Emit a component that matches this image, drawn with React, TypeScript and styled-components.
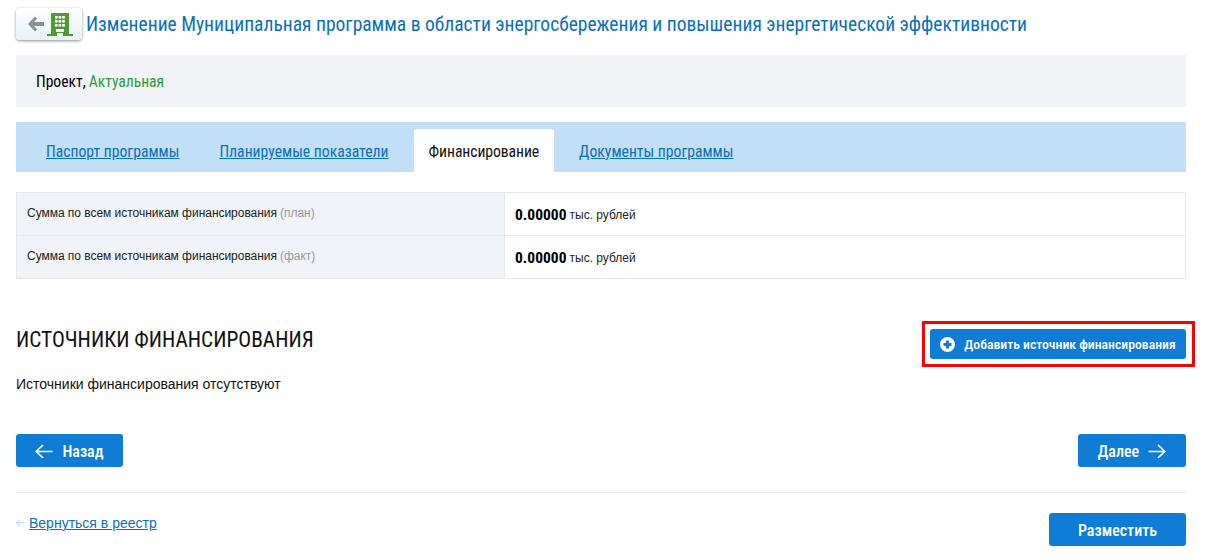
import styled, { createGlobalStyle } from "styled-components"

const GlobalStyle = createGlobalStyle`
	html, body {
		margin: 0;
		padding: 0;
		background: #fff;
		font-family: Roboto, "Liberation Sans", sans-serif;
	}
`

const Page = styled.div`
	width: 1170px;
	height: 559px;
	margin-left: 16px;
	display: flex;
	flex-direction: column;
`

const Header = styled.div`
	display: flex;
	align-items: center;
	gap: 5px;
	height: 32px;
	margin-top: 8px;
`

const BackTile = styled.a`
	width: 66px;
	height: 32px;
	box-sizing: border-box;
	padding-left: 12px;
	display: flex;
	align-items: center;
	gap: 3px;
	border-radius: 4px;
	background: linear-gradient(#ffffff, #e8f1f8);
	box-shadow: 0 1px 3px rgba(0, 0, 0, 0.45);
`

const Title = styled.h1`
	margin: 0 0 0 -1px;
	font-size: 19.54px;
	font-weight: 400;
	font-stretch: condensed;
	color: #0a70b8;
	white-space: nowrap;
`

const StatusBar = styled.div`
	height: 52px;
	margin-top: 15px;
	box-sizing: border-box;
	padding: 1px 0 0 20px;
	display: flex;
	align-items: center;
	background: #f1f3f6;
	font-size: 15.6px;
	font-stretch: condensed;
	color: #000;
`

const StatusValue = styled.span`
	color: #2a9d3a;
	margin-left: 3px;
`

const TabBar = styled.div`
	height: 50px;
	margin-top: 15px;
	box-sizing: border-box;
	padding: 7px 0 0 15px;
	display: flex;
	background: #c2dff7;
	font-size: 15.7px;
	font-stretch: condensed;
`

const Tab = styled.a<{ $active?: boolean }>`
	height: 43px;
	box-sizing: border-box;
	padding: 13px 15px 0;
	margin-right: 10px;
	border-radius: 3px 3px 0 0;
	background: ${(p) => (p.$active ? "#fff" : "transparent")};
	color: ${(p) => (p.$active ? "#111" : "#0a70b8")};
	text-decoration: ${(p) => (p.$active ? "none" : "underline")};
	letter-spacing: ${(p) => (p.$active ? "-0.08px" : "0")};
	white-space: nowrap;
`

const SummaryTable = styled.div`
	margin-top: 20px;
	border: 1px solid #e4e9ee;
	border-bottom-width: 0;
`

const SummaryRow = styled.div`
	display: grid;
	grid-template-columns: 488px 1fr;
	height: 43px;
	box-sizing: border-box;
	border-bottom: 1px solid #e4e9ee;
`

const SummaryLabel = styled.div`
	display: flex;
	align-items: center;
	padding: 0 10px 3px;
	background: #f0f3f7;
	border-right: 1px solid #e4e9ee;
	font-family: "Liberation Sans", Arial, sans-serif;
	font-size: 12px;
	letter-spacing: -0.03px;
	color: #222;
`

const Muted = styled.span`
	color: #999;
	margin-left: 3px;
`

const SummaryValue = styled.div`
	display: flex;
	align-items: center;
	padding: 1px 0 0 10px;
	font-family: "Liberation Sans", Arial, sans-serif;
	font-size: 12px;
	color: #222;
`

const Amount = styled.b`
	font-family: Roboto, sans-serif;
	font-size: 15.5px;
	font-stretch: condensed;
	color: #000;
	margin-right: 3px;
`

const SectionHead = styled.div`
	display: flex;
	align-items: flex-start;
	justify-content: space-between;
	margin-top: 50px;
	height: 30px;
`

const SectionTitle = styled.h2`
	margin: 0;
	font-size: 21.4px;
	line-height: 22px;
	font-weight: 400;
	font-stretch: condensed;
	color: #111;
`

const Button = styled.button<{ $width: number; $height?: number; $size?: number }>`
	position: relative;
	width: ${(p) => p.$width}px;
	height: ${(p) => p.$height ?? 33}px;
	padding: ${(p) => (p.$height ? "0" : "1px 0 0")};
	display: flex;
	align-items: center;
	justify-content: center;
	gap: 9px;
	border: 0;
	border-radius: 3px;
	background: #0f7dd6;
	color: #fff;
	font-family: inherit;
	font-size: ${(p) => p.$size ?? 16}px;
	font-stretch: condensed;
	font-weight: 500;
`

const Highlight = styled.span`
	position: absolute;
	left: -8px;
	right: -9px;
	top: -8px;
	bottom: -8px;
	border: 3px solid #f00;
	pointer-events: none;
`

const EmptyNote = styled.p`
	margin: 17px 0 0;
	font-family: "Liberation Sans", Arial, sans-serif;
	font-size: 14px;
	line-height: 16px;
	color: #111;
`

const NavRow = styled.div`
	display: flex;
	justify-content: space-between;
	margin-top: 42px;
`

const Divider = styled.hr`
	width: 100%;
	height: 1px;
	margin: 25px 0 0;
	border: 0;
	background: #eaeaea;
`

const FooterRow = styled.div`
	display: flex;
	justify-content: space-between;
	margin-top: 20px;
`

const ReturnLink = styled.div`
	display: flex;
	align-items: center;
	gap: 4px;
	height: 20px;
	font-family: "Liberation Sans", Arial, sans-serif;
	font-size: 14px;
	color: #0a70b8;
`

const ReturnAnchor = styled.a`
	text-decoration: underline;
`

const Arrow = ({ dir, size = 18, color = "#fff" }: { dir: "left" | "right"; size?: number; color?: string }) => (
	<svg width={size} height={size * 0.83} viewBox="0 0 18 15" fill="none" stroke={color} strokeWidth="1.6">
		{dir === "left" ? <path d="M17.5 7.5H1.2M8 1 1.2 7.5 8 14" /> : <path d="M.5 7.5h16.3M10 1l6.8 6.5L10 14" />}
	</svg>
)

const BuildingBack = () => (
	<>
		<svg width="16" height="16" viewBox="0 0 16 16">
			<path d="M7 0.5 9.2 2.7 5.9 6H16v4H5.9l3.3 3.3L7 15.5 0 8z" fill="#8e9092" />
		</svg>
		<svg width="26" height="23" viewBox="0 0 26 23">
			<path d="M4 0h18v21h4v2H16v-3H10v3H0v-2h4z" fill="#4f9a35" />
			<g fill="#fff">
				{[3, 7, 11].map((y) =>
					[8, 11.6, 15.2].map((x) => <rect key={`${x}-${y}`} x={x} y={y} width="2.6" height="2.6" />),
				)}
				<rect x="9" y="16" width="8" height="3" />
			</g>
		</svg>
	</>
)

const PlusCircle = () => (
	<svg width="15" height="15" viewBox="0 0 15 15">
		<circle cx="7.5" cy="7.5" r="7.5" fill="#fff" />
		<path d="M6 3.5h3V6h2.5v3H9v2.5H6V9H3.5V6H6z" fill="#0f7dd6" />
	</svg>
)

export default function App() {
	return (
		<Page>
			<GlobalStyle />
			<Header>
				<BackTile>
					<BuildingBack />
				</BackTile>
				<Title>Изменение Муниципальная программа в области энергосбережения и повышения энергетической эффективности</Title>
			</Header>
			<StatusBar>
				Проект,<StatusValue>Актуальная</StatusValue>
			</StatusBar>
			<TabBar>
				<Tab>Паспорт программы</Tab>
				<Tab>Планируемые показатели</Tab>
				<Tab $active>Финансирование</Tab>
				<Tab>Документы программы</Tab>
			</TabBar>
			<SummaryTable>
				<SummaryRow>
					<SummaryLabel>
						Сумма по всем источникам финансирования<Muted>(план)</Muted>
					</SummaryLabel>
					<SummaryValue>
						<Amount>0.00000</Amount> тыс. рублей
					</SummaryValue>
				</SummaryRow>
				<SummaryRow>
					<SummaryLabel>
						Сумма по всем источникам финансирования<Muted>(факт)</Muted>
					</SummaryLabel>
					<SummaryValue>
						<Amount>0.00000</Amount> тыс. рублей
					</SummaryValue>
				</SummaryRow>
			</SummaryTable>
			<SectionHead>
				<SectionTitle>ИСТОЧНИКИ ФИНАНСИРОВАНИЯ</SectionTitle>
				<Button $width={256} $height={30} $size={13.7}>
					<Highlight />
					<PlusCircle />
					Добавить источник финансирования
				</Button>
			</SectionHead>
			<EmptyNote>Источники финансирования отсутствуют</EmptyNote>
			<NavRow>
				<Button $width={107}>
					<Arrow dir="left" />
					Назад
				</Button>
				<Button $width={108}>
					Далее
					<Arrow dir="right" />
				</Button>
			</NavRow>
			<Divider />
			<FooterRow>
				<ReturnLink>
					<Arrow dir="left" size={9} color="#9cc3e3" />
					<ReturnAnchor>Вернуться в реестр</ReturnAnchor>
				</ReturnLink>
				<Button $width={137}>Разместить</Button>
			</FooterRow>
		</Page>
	)
}
